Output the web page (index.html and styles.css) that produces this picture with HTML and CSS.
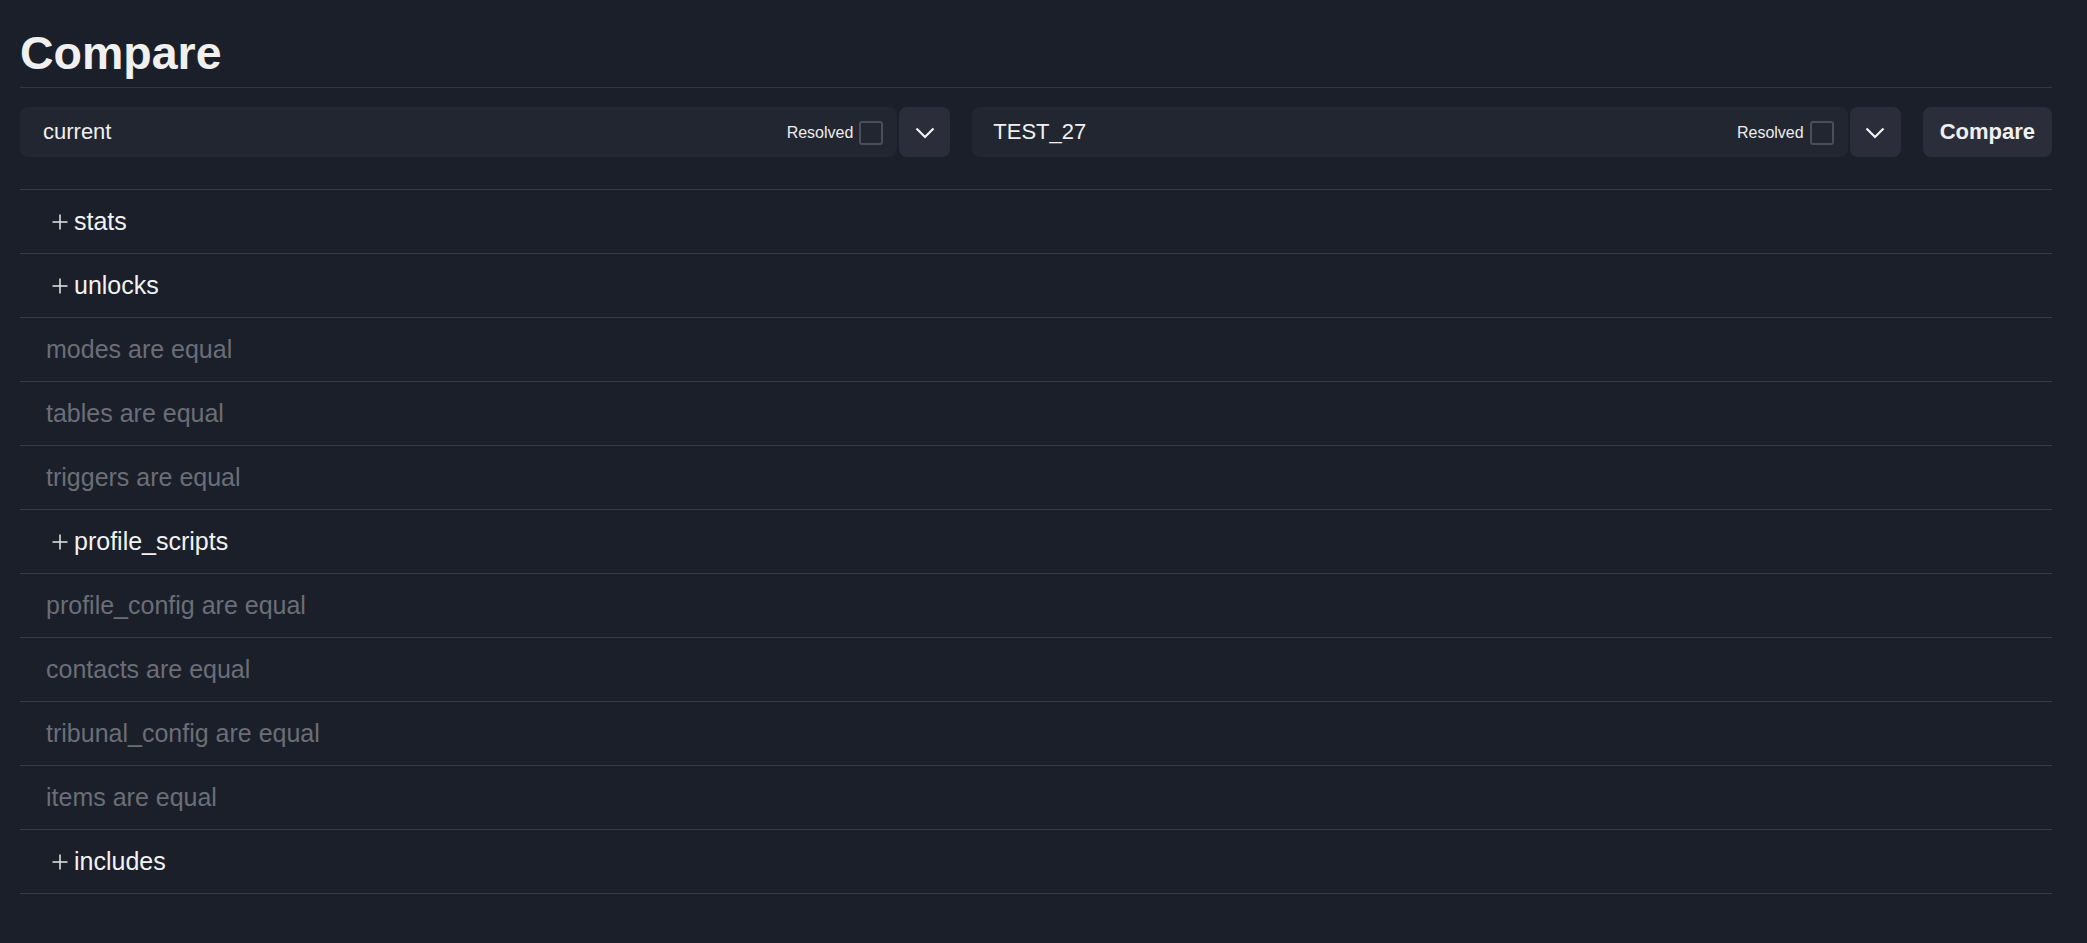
FILE: index.html
```html
<!DOCTYPE html>
<html>
<head>
<meta charset="utf-8">
<link rel="stylesheet" href="styles.css">
</head>
<body>
<div class="page">
  <header class="header">
    <h1 class="title">Compare</h1>
  </header>
  <div class="controls">
    <div class="field">
      <span class="field-value">current</span>
      <label class="resolved">Resolved<span class="checkbox"></span></label>
    </div>
    <button class="chevron-btn"><svg width="20" height="12" viewBox="0 0 20 12"><path d="M1.5 1.5 L10 10 L18.5 1.5" fill="none" stroke="#f2f2f2" stroke-width="2.2"/></svg></button>
    <div class="field field-second">
      <span class="field-value">TEST_27</span>
      <label class="resolved">Resolved<span class="checkbox"></span></label>
    </div>
    <button class="chevron-btn"><svg width="20" height="12" viewBox="0 0 20 12"><path d="M1.5 1.5 L10 10 L18.5 1.5" fill="none" stroke="#f2f2f2" stroke-width="2.2"/></svg></button>
    <button class="compare-btn">Compare</button>
  </div>
  <div class="list">
    <div class="row expandable"><svg class="plus" width="16" height="16" viewBox="0 0 16 16"><path d="M8 0.5 V15.5 M0.5 8 H15.5" stroke="#e6e6e6" stroke-width="1.5"/></svg><span>stats</span></div>
    <div class="row expandable"><svg class="plus" width="16" height="16" viewBox="0 0 16 16"><path d="M8 0.5 V15.5 M0.5 8 H15.5" stroke="#e6e6e6" stroke-width="1.5"/></svg><span>unlocks</span></div>
    <div class="row equal">modes are equal</div>
    <div class="row equal">tables are equal</div>
    <div class="row equal">triggers are equal</div>
    <div class="row expandable"><svg class="plus" width="16" height="16" viewBox="0 0 16 16"><path d="M8 0.5 V15.5 M0.5 8 H15.5" stroke="#e6e6e6" stroke-width="1.5"/></svg><span>profile_scripts</span></div>
    <div class="row equal">profile_config are equal</div>
    <div class="row equal">contacts are equal</div>
    <div class="row equal">tribunal_config are equal</div>
    <div class="row equal">items are equal</div>
    <div class="row expandable"><svg class="plus" width="16" height="16" viewBox="0 0 16 16"><path d="M8 0.5 V15.5 M0.5 8 H15.5" stroke="#e6e6e6" stroke-width="1.5"/></svg><span>includes</span></div>
  </div>
</div>
</body>
</html>
```

FILE: styles.css
```css
html, body {
  margin: 0;
  padding: 0;
  background: #1b1f2a;
  font-family: "Liberation Sans", Arial, sans-serif;
  color: #f0f0f0;
}

.page {
  padding: 27px 35px 20px 20px;
}

.header {
  border-bottom: 1px solid #33363f;
  padding-bottom: 7px;
}

.title {
  margin: 0;
  font-size: 46.5px;
  line-height: 1.15;
  font-weight: bold;
  color: #f0f0f0;
}

.controls {
  display: flex;
  align-items: stretch;
  margin-top: 19px;
  height: 50px;
}

.field {
  flex: 1;
  display: flex;
  align-items: center;
  background: #222631;
  border-radius: 8px;
  padding: 0 14px 0 23px;
  margin-right: 2px;
}

.field-second {
  margin-left: 22px;
  padding-left: 21px;
}

.field-value {
  flex: 1;
  font-size: 22px;
  color: #f0f0f0;
}

.resolved {
  display: flex;
  align-items: center;
  gap: 6px;
  font-size: 16px;
  color: #ececec;
  padding-top: 1px;
}

.checkbox {
  width: 20px;
  height: 20px;
  border: 2px solid #4a4e59;
  border-radius: 3px;
  box-sizing: content-box;
}

.chevron-btn {
  width: 51px;
  border: none;
  border-radius: 8px;
  background: #2b2e3a;
  display: flex;
  align-items: center;
  justify-content: center;
  padding: 0;
  padding-top: 2px;
}

.compare-btn {
  margin-left: 22px;
  border: none;
  border-radius: 8px;
  background: #2b2e3a;
  color: #f0f0f0;
  font-family: "Liberation Sans", Arial, sans-serif;
  font-weight: bold;
  font-size: 22px;
  padding: 0 17px;
}

.list {
  margin-top: 32px;
  border-top: 1px solid #383b45;
}

.row {
  height: 63px;
  border-bottom: 1px solid #383b45;
  display: flex;
  align-items: center;
  padding-left: 26px;
  font-size: 25px;
}

.expandable {
  color: #f2f2f2;
}

.plus {
  margin-left: 6px;
  margin-right: 6px;
  flex: none;
}

.equal {
  color: #6b6e77;
}
```
